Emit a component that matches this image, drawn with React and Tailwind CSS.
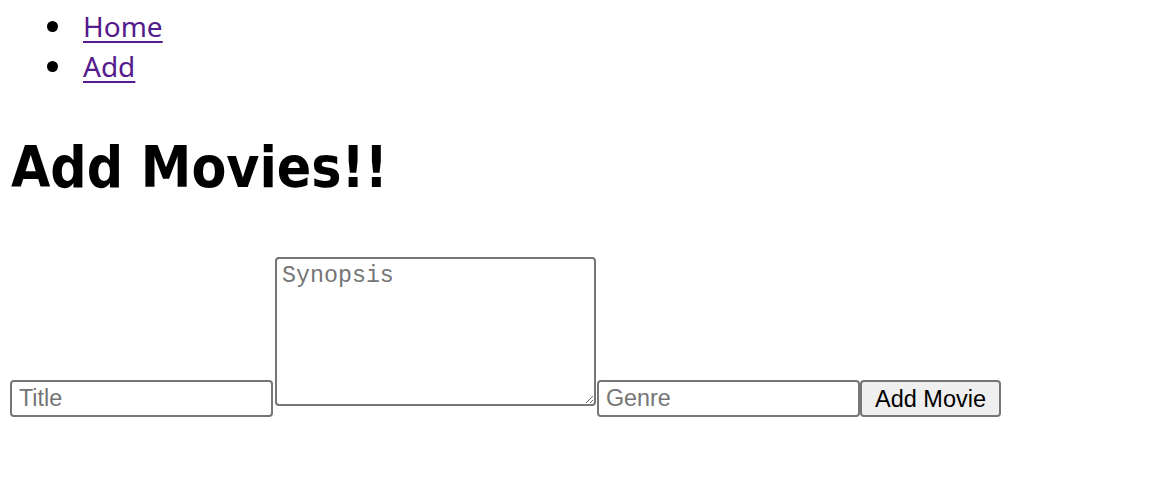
export default function App() {
  return (
    <div className="bg-white min-h-[484px] w-[1156px] text-black" style={{ fontFamily: '"Noto Sans", sans-serif' }}>
      <ul className="pt-[6px] m-0">
        <li className="flex items-center h-[40px]">
          <span className="ml-[47px] w-[11px] h-[11px] rounded-full bg-black" aria-hidden="true"></span>
          <a href="#" className="ml-[25px] text-[28px] leading-[40px] text-[#551a8b] underline decoration-[2px] underline-offset-[4px]">Home</a>
        </li>
        <li className="flex items-center h-[40px]">
          <span className="ml-[47px] w-[11px] h-[11px] rounded-full bg-black" aria-hidden="true"></span>
          <a href="#" className="ml-[25px] text-[28px] leading-[40px] text-[#551a8b] underline decoration-[2px] underline-offset-[4px]">Add</a>
        </li>
      </ul>
      <h1 className="ml-[11px] mt-[42px] text-[56.5px] leading-[80px] font-bold" style={{ fontFamily: '"DejaVu Sans Condensed", "Noto Sans", sans-serif' }}>Add Movies!!</h1>
      <form className="flex items-end ml-[10px] mt-[49px]" style={{ fontFamily: '"Liberation Sans", Arial, sans-serif' }}>
        <input
          placeholder="Title"
          className="w-[263px] h-[37px] border-2 border-[#767676] rounded-[4px] px-[7px] text-[23.3px] placeholder:text-[#757575] outline-none"
        />
        <textarea
          placeholder="Synopsis"
          className="ml-[2px] mb-[11px] w-[321px] h-[149px] border-2 border-[#767676] rounded-[4px] px-[5px] py-[3px] text-[23.3px] leading-[28px] placeholder:text-[#757575] outline-none resize"
          style={{ fontFamily: '"Courier New", "Nimbus Mono PS", "Nimbus Mono L", FreeMono, "Liberation Mono", monospace' }}
        />
        <input
          placeholder="Genre"
          className="ml-[1px] w-[263px] h-[37px] border-2 border-[#767676] rounded-[4px] px-[7px] text-[23.3px] placeholder:text-[#757575] outline-none"
        />
        <button
          type="button"
          className="w-[141px] h-[37px] border-2 border-[#767676] rounded-[4px] bg-[#efefef] text-[23.5px] text-black px-[12px]"
        >
          Add Movie
        </button>
      </form>
    </div>
  );
}
